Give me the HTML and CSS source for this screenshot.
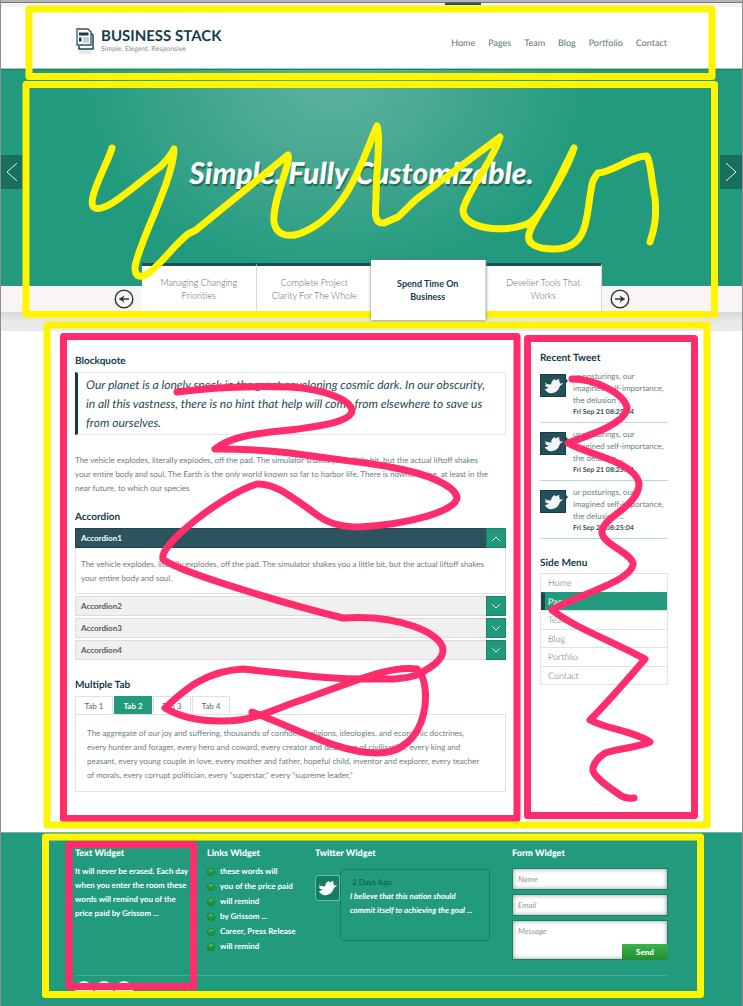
FILE: index.html
```html
<!DOCTYPE html>
<html lang="en">
<head>
<meta charset="utf-8">
<title>Business Stack</title>
<link rel="stylesheet" href="styles.css">
</head>
<body>
<svg class="symbols" aria-hidden="true">
  <symbol id="bird" viewBox="0 0 24 20">
    <path d="M1 6c3 2 5 2 8 2C9 4 11 2 14 1c0 1 0 1 1 2 1-1 3-2 5-2-1 1-1 1-1 2 1 1 1 3 1 4 1 0 2 0 4-1-1 2-2 3-4 4-1 5-5 9-11 9-4 0-6-2-8-5 2 0 4-1 5-2-3 0-4-2-5-3h2C2 8 1 7 1 6z"/>
  </symbol>
  <symbol id="down" viewBox="0 0 8 5"><path d="M.5.5 4 4 7.500.5"/></symbol>
</svg>
<div class="page">
  <div class="topbar"><span class="topbar-mark"></span></div>
  <header class="header">
    <a class="brand" href="#">
      <svg class="brand-icon" viewBox="0 0 20 26" aria-hidden="true">
        <ellipse cx="10" cy="24" rx="7" ry="2" fill="#e3eaec"/>
        <path d="M4 18v3h14V7l-2-2" fill="#fff" stroke="#1d4650" stroke-width="1.500"/>
        <path d="M2 1h11l3 3v13H2z" fill="#fff" stroke="#2c5662" stroke-width="1.300"/>
        <path d="M4 4.500h9.500v3H4zM4 9.500h2.500v4H4z" fill="#153b49"/>
        <path d="M8 10h6M8 12h6M8 14h6" stroke="#91a4aa"/>
      </svg>
      <span class="brand-text"><strong>BUSINESS STACK</strong><small>Simple. Elegent. Responsive</small></span>
    </a>
    <nav class="nav">
      <a href="#">Home</a><a href="#">Pages</a><a href="#">Team</a><a href="#">Blog</a><a href="#">Portfolio</a><a href="#">Contact</a>
    </nav>
  </header>

  <section class="hero">
    <button class="slide" aria-label="Previous slide"><svg viewBox="0 0 12 20"><path d="M11 1 1 10l10 9"/></svg></button>
    <h1>Simple. Fully Customizable.</h1>
    <button class="slide" aria-label="Next slide"><svg viewBox="0 0 12 20"><path d="m1 1 10 9-10 9"/></svg></button>
  </section>
  <section class="features">
    <button class="round" aria-label="Previous"><svg viewBox="0 0 20 20"><circle cx="10" cy="10" r="8.800"/><path d="M15 10H7"/><path class="head" d="m4.500 10 6-3.500-1.500 3.500 1.500 3.500z"/></svg></button>
    <div class="feature-tabs">
      <button>Managing Changing<br>Priorities</button>
      <button>Complete Project<br>Clarity For The Whole</button>
      <button class="current">Spend Time On<br>Business</button>
      <button>Develier Tools That<br>Works</button>
    </div>
    <button class="round" aria-label="Next"><svg viewBox="0 0 20 20"><circle cx="10" cy="10" r="8.800"/><path d="M5 10h8"/><path class="head" d="m15.500 10-6-3.500 1.500 3.500-1.500 3.500z"/></svg></button>
  </section>
  <div class="shade"></div>

  <div class="content">
    <main class="main">
      <h2>Blockquote</h2>
      <blockquote>Our planet is a lonely speck in the great enveloping cosmic dark. In our obscurity,<br>in all this vastness, there is no hint that help will come from elsewhere to save us<br>from ourselves.</blockquote>
      <p class="intro">The vehicle explodes, literally explodes, off the pad. The simulator shakes you a little bit, but the actual liftoff shakes<br>your entire body and soul. The Earth is the only world known so far to harbor life. There is nowhere else, at least in the<br>near future, to which our species</p>

      <h2>Accordion</h2>
      <div class="accordion">
        <button class="bar open"><span>Accordion1</span><i><svg class="up"><use href="#down"/></svg></i></button>
        <p class="accordion-body">The vehicle explodes, literally explodes, off the pad. The simulator shakes you a little bit, but the actual liftoff shakes<br>your entire body and soul.</p>
        <button class="bar"><span>Accordion2</span><i><svg><use href="#down"/></svg></i></button>
        <button class="bar"><span>Accordion3</span><i><svg><use href="#down"/></svg></i></button>
        <button class="bar"><span>Accordion4</span><i><svg><use href="#down"/></svg></i></button>
      </div>

      <h2>Multiple Tab</h2>
      <div class="tabs"><button>Tab 1</button><button class="active">Tab 2</button><button>Tab 3</button><button>Tab 4</button></div>
      <p class="tab-body">The aggregate of our joy and suffering, thousands of confident religions, ideologies, and economic doctrines,<br>every hunter and forager, every hero and coward, every creator and destroyer of civilization, every king and<br>peasant, every young couple in love, every mother and father, hopeful child, inventor and explorer, every teacher<br>of morals, every corrupt politician, every "superstar," every "supreme leader,"</p>
    </main>

    <aside class="side">
      <h2>Recent Tweet</h2>
      <ul class="tweets">
        <li><span class="badge"><svg><use href="#bird"/></svg></span><p>ur posturings, our<br>imagined self-importance,<br>the delusion ...<strong>Fri Sep 21 08:25:04</strong></p></li>
        <li><span class="badge"><svg><use href="#bird"/></svg></span><p>ur posturings, our<br>imagined self-importance,<br>the delusion ...<strong>Fri Sep 21 08:25:04</strong></p></li>
        <li><span class="badge"><svg><use href="#bird"/></svg></span><p>ur posturings, our<br>imagined self-importance,<br>the delusion ...<strong>Fri Sep 21 08:25:04</strong></p></li>
      </ul>
      <h2>Side Menu</h2>
      <nav class="menu">
        <a href="#">Home</a><a class="active" href="#">Pages</a><a href="#">Team</a><a href="#">Blog</a><a href="#">Portfilio</a><a href="#">Contact</a>
      </nav>
    </aside>
  </div>

  <footer class="footer">
    <div class="widgets">
      <section>
        <h2>Text Widget</h2>
        <p class="about">It will never be erased. Each day<br>when you enter the room these<br>words will remind you of the<br>price paid by Grissom ...</p>
      </section>
      <section>
        <h2>Links Widget</h2>
        <ul class="links">
          <li><a href="#">these words will</a></li>
          <li><a href="#">you of the price paid</a></li>
          <li><a href="#">will remind</a></li>
          <li><a href="#">by Grissom ...</a></li>
          <li><a href="#">Career, Press Release</a></li>
          <li><a href="#">will remind</a></li>
        </ul>
      </section>
      <section>
        <h2>Twitter Widget</h2>
        <div class="quote">
          <span class="quote-icon"><svg><use href="#bird"/></svg></span>
          <div class="bubble"><span>2 Days Ago</span><em>I believe that this nation should<br>commit itself to achieving the goal ...</em></div>
        </div>
      </section>
      <section>
        <h2>Form Widget</h2>
        <form class="form">
          <input type="text" placeholder="Name" aria-label="Name">
          <input type="email" placeholder="Email" aria-label="Email">
          <div class="message">
            <textarea placeholder="Message" aria-label="Message"></textarea>
            <button type="button">Send</button>
          </div>
        </form>
      </section>
    </div>
    <div class="social"><a href="#" aria-label="Facebook"></a><a href="#" aria-label="Twitter"></a><a href="#" aria-label="RSS"></a></div>
  </footer>

  <svg class="markup" viewBox="0 0 743 1006" aria-hidden="true">
    <g stroke="#ff2d6c">
      <rect x="63.500" y="336.500" width="453.500" height="482"/>
      <rect x="527.500" y="338.500" width="167" height="477"/>
      <rect x="69" y="844.500" width="124.500" height="142"/>
      <path d="M177 392C220 386 255 386 290 387C325 389 350 400 352 410C352 422 320 426 290 430C245 434 228 439 215 449C240 449 265 450 290 453C330 459 365 462 390 467C430 474 454 486 457 497C457 511 410 524 360 527C345 527 330 524 320 517C293 498 276 483 257 484C225 493 158 545 163 559C175 571 290 605 343 618C400 614 443 634 443 650C443 660 432 667 417 675C402 680 384 679 363 679C335 679 315 677 290 674L243 669C205 671 184 690 165 708C180 717 200 721 220 721C245 722 265 714 290 704C345 686 385 665 417 669C432 680 432 753 377 753C340 753 300 730 252 712"/>
      <path d="M572 379C595 379 623 393 627 407C627 422 596 433 568 443C588 455 634 461 639 483C640 506 602 517 602 532C601 544 635 554 633 565C629 582 580 594 552 610C575 628 610 640 645 659C627 680 608 702 590 720C606 729 634 731 650 742C636 748 620 748 605 753C597 758 592 766 593 771C596 779 610 788 620 795Q625 799 634 798"/>
    </g>
    <g stroke="#fff500">
      <rect x="29" y="9" width="683" height="67.500"/>
      <rect x="26" y="84.500" width="688.500" height="230"/>
      <rect x="47" y="325" width="660" height="500"/>
      <rect x="45.500" y="837" width="655" height="157.500"/>
      <path d="M112 148C108 163 84 203 95 208C107 213 137 183 160 167C167 160 171 155 174 149C174 179 138 244 135 267C135 281 145 276 150 272C164 261 172 247 188 234L196 230L288 155C292 162 272 200 274 222C277 239 294 237 306 231C350 210 363 157 377 126C381 136 376 175 376 199C375 213 374 224 384 223L398 217C410 206 414 200 422 195L500 137C495 157 466 193 463 210C463 233 519 233 533 220C546 208 556 184 574 148C564 180 535 216 530 231C524 245 539 249 554 249C590 249 586 214 591 190C592 181 594 178 598 173C611 173 633 155 647 156C651 163 651 178 655 198C657 218 654 230 650 242"/>
    </g>
  </svg>
</div>
</body>
</html>
```

FILE: styles.css
```css
* { box-sizing: border-box; }
body { margin: 0; font-family: Lato, "Open Sans", sans-serif; font-size: 9px; color: #52696f; background: #fff; text-rendering: geometricPrecision; }
h1, h2, p, ul, blockquote { margin: 0; padding: 0; }
ul { list-style: none; }
a { color: inherit; text-decoration: none; }
button { font: inherit; color: inherit; border: 0; padding: 0; background: none; }
i { font-style: normal; }
h2 { font-size: 10px; line-height: 12px; font-weight: 700; color: #153b49; }
.symbols { display: none; }
.page { position: relative; border: solid #8e8e8e; border-width: 0 1px; }
.markup { position: absolute; top: 0; left: -1px; width: calc(100% + 2px); pointer-events: none; fill: none; stroke-width: 7; stroke-linecap: round; stroke-linejoin: round; }

.topbar { display: flex; justify-content: flex-end; height: 7px; padding-right: 261px; background: #f2f2f2; border-top: 2px solid #b5b5b5; box-shadow: inset 0 1px #777; }
.topbar-mark { width: 36px; height: 3px; background: #2b4f5d; border-top: 1px solid #666; }
.header { display: flex; justify-content: space-between; align-items: flex-start; height: 62px; padding: 20px 75px 0 74px; border-bottom: 1px solid #b4c4c0; background: #fff; }
.brand { display: flex; gap: 6px; }
.brand-icon { width: 20px; height: 26px; margin-top: 1px; }
.brand-text { display: flex; flex-direction: column; }
.brand-text strong { font-size: 15px; line-height: 18px; color: #153b49; }
.brand-text small { font-size: 7px; line-height: 8px; color: #829095; }
.nav { display: flex; gap: 13px; margin-top: 10px; line-height: 12px; color: #5a747b; }

.hero { display: flex; justify-content: space-between; align-items: center; height: 217px; padding-bottom: 12px; color: #fff; background: radial-gradient(ellipse 260px 200px at 45% 5%, #5bb29c, #4baa93 35%, #219a7e 100%) #219a7e; border-top: 1px solid #168267; }
.hero h1 { padding: 2px 20px 0 0; font-size: 30px; line-height: 40px; font-weight: 900; font-style: italic; text-shadow: 1px 2px 1px #17644f; }
.slide { display: flex; align-items: center; justify-content: center; width: 22px; height: 34px; background: #17705d; }
.slide svg { width: 12px; height: 20px; fill: none; stroke: #e4f1ed; }
.features { display: flex; justify-content: center; gap: 8px; height: 26px; background: #f8f5f4; }
.round { height: 20px; margin-top: 3px; }
.round svg { display: block; width: 20px; height: 20px; fill: none; stroke: #373a3c; stroke-width: 1.500; }
.round .head { fill: #373a3c; stroke: none; }
.feature-tabs { display: flex; flex: 0 1 460px; margin-top: -23px; height: 48px; }
.feature-tabs button { flex: 1; line-height: 13px; font-weight: 300; background: #fff; color: #52696f; border-top: 3px solid #1d4d58; border-right: 1px solid #d8dada; }
.feature-tabs .current { z-index: 1; height: 60px; margin: -3px 0 0 -2px; border-top: 0; font-weight: 700; color: #153b49; box-shadow: 0 0 3px #777; }
.shade { height: 19px; background: linear-gradient(#d9d9d9, #e8e8e8 50%, #ebebeb); }

.content { display: flex; gap: 34px; padding: 0 74px 40px; }
.main { flex: 1; min-width: 0; padding-top: 24px; white-space: nowrap; }
.main h2 { margin-bottom: 5px; }
.main p { font-size: 8px; line-height: 14px; color: #6a7f84; }
blockquote { padding: 2px 8px; border: 1px solid #e5e5e5; border-left: 3px solid #153b49; font-size: 12px; line-height: 19px; font-style: italic; color: #284c57; }
.main .intro { margin: 18px 0 16px; }
.bar { display: flex; width: 100%; height: 20px; margin-top: 2px; border: 1px solid #dcdcdc; background: #f0f0f0; text-align: left; align-items: stretch; font-size: 8px; line-height: 18px; color: #4a5e64; font-weight: 700; }
.bar span { flex: 1; padding-left: 5px; }
.bar i { display: flex; width: 20px; margin: -1px; align-items: center; justify-content: center; background: #219a7e; border: 1px solid #178468; }
.bar svg { width: 8px; height: 5px; fill: none; stroke: #fff; }
.bar .up { transform: rotate(180deg); }
.bar.open { margin-top: 0; background: #2c545e; border-color: #21444e; color: #fff; }
.accordion { margin-bottom: 19px; }
.main .accordion-body { padding: 9px 5px 8px; border: 1px solid #e2e2e2; border-top: 0; }
.tabs { display: flex; gap: 1px; }
.tabs button { width: 38px; height: 18px; border: 1px solid #e2e2e2; border-bottom: 0; font-size: 8px; }
.tabs .active { background: #219a7e; border-color: #219a7e; color: #fff; font-weight: 700; }
.main .tab-body { padding: 11px 11px 9px; border: 1px solid #e2e2e2; }

.side { width: 128px; padding-top: 21px; white-space: nowrap; }
.tweets { margin: 6px 0 18px; }
.tweets li { display: flex; gap: 7px; padding-bottom: 3px; margin-bottom: 5px; border-bottom: 1px solid #b9dbd2; }
.tweets p { font-size: 8px; line-height: 12px; color: #6a7f84; }
.tweets strong { display: block; font-size: 7px; font-weight: 700; line-height: 13px; color: #3d555d; }
.badge { display: flex; flex: none; position: relative; align-items: center; justify-content: center; width: 26px; height: 23px; margin-top: 4px; background: #24505b; border: 1px solid #183c47; }
.badge::after { content: ""; position: absolute; left: 100%; top: 3px; border: solid transparent; border-width: 3px; border-left-color: #183c47; border-right: 0; }
.badge svg { width: 19px; height: 16px; fill: #f2f5f5; }
.menu { display: flex; flex-direction: column; height: 112px; margin-top: 4px; font-weight: 300; border: 1px solid #e2e2e2; border-top: 0; }
.menu a { flex: 1; display: flex; align-items: center; padding-left: 7px; border-top: 1px solid #e2e2e2; }
.menu .active { border-color: #219a7e; background: #219a7e; color: #fff; border-left: 4px solid #1d4650; padding-left: 3px; font-weight: 400; }

.footer { padding: 14px 74px 0; height: 174px; background: #219a7e; border-top: 1px solid #6cb9a6; color: #fff; overflow: hidden; white-space: nowrap; }
.footer h2 { color: #fff; font-size: 9px; font-weight: 900; }
.widgets { display: grid; grid-template-columns: minmax(0, 132fr) minmax(0, 108fr) minmax(0, 197fr) minmax(0, 156fr); height: 129px; border-bottom: 1px solid #46aa92; }
.about { margin-top: 5px; font-size: 8px; font-weight: 700; line-height: 14px; }
.links { margin-top: 5px; font-size: 8px; font-weight: 700; line-height: 15px; }
.links li { display: flex; align-items: center; gap: 5px; }
.links li::before { content: ""; width: 6px; height: 6px; border-radius: 50%; background: linear-gradient(#7ac68b, #209a2a 50%); border: 1px solid #157d3c; }
.quote { display: flex; align-items: flex-start; margin: 10px 22px 0 0; }
.quote-icon { display: flex; flex: none; align-items: center; justify-content: center; width: 25px; height: 26px; margin-top: 6px; background: #177e66; border: 1px solid #71b9a8; border-radius: 3px 0 0 3px; }
.quote-icon svg { width: 19px; height: 16px; fill: #fff; }
.bubble { flex: 1; min-width: 0; height: 72px; padding: 5px 9px; border: 1px solid #178066; border-radius: 4px; }
.bubble span { display: block; padding-left: 2px; line-height: 14px; font-size: 8px; color: #0f5b4a; }
.bubble em { display: block; line-height: 14px; font-weight: 700; font-size: 8px; }
.form { display: flex; flex-direction: column; gap: 4px; margin-top: 9px; }
.form input, .form textarea { display: block; width: 100%; height: 22px; padding: 0 5px; border: 1px solid #178066; border-radius: 0; background: #fff; box-shadow: inset 0 0 5px #999; font: italic 8px Lato, sans-serif; resize: none; }
.form textarea { height: 40px; padding-top: 5px; }
.form ::placeholder { color: #969696; opacity: 1; }
.message { position: relative; }
.message button { position: absolute; right: 0; bottom: 0; width: 46px; height: 16px; background: linear-gradient(#3ab54a, #258b32); color: #fff; font-size: 8px; font-weight: 900; }
.social { display: flex; gap: 2px; margin-top: 5px; }
.social a { width: 18px; height: 18px; border-radius: 50%; background: linear-gradient(#e8f1ef 0 10px, #219a7e 10px); }
```
